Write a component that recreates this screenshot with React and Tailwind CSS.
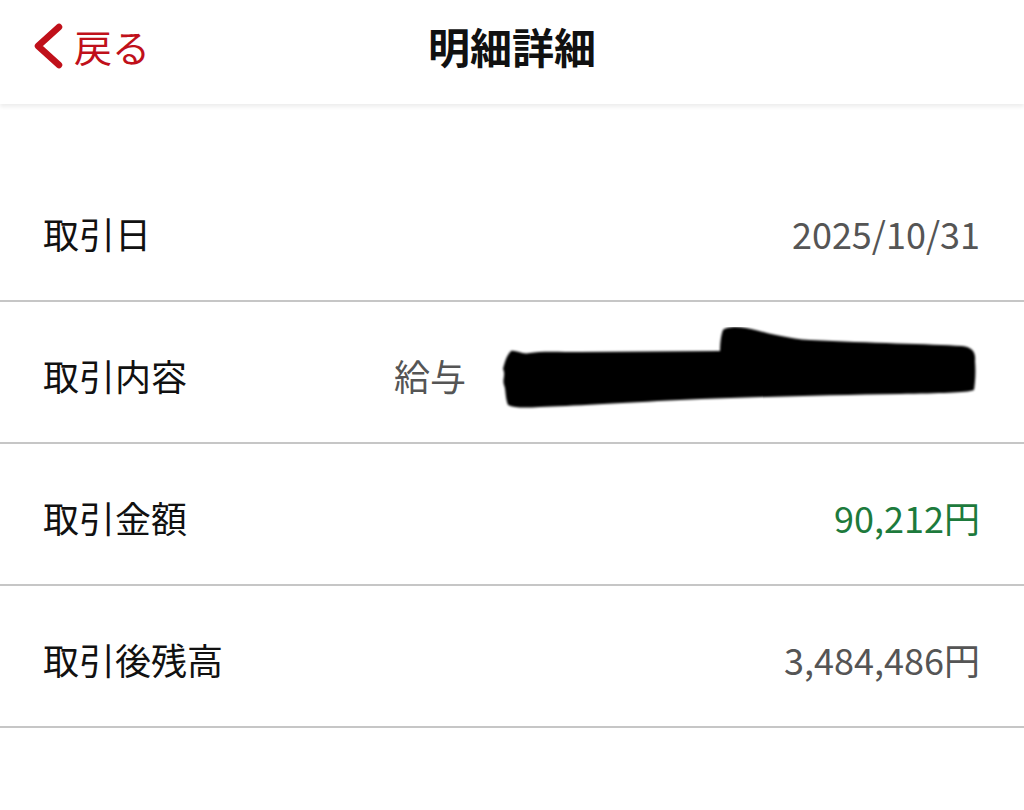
import React from "react";

const font = { fontFamily: '"Noto Sans CJK JP", "Noto Sans", sans-serif' };

const rows = [
  { label: "取引日", value: "2025/10/31", tone: "text-[#555555]" },
  { label: "取引内容", value: "給与", tone: "text-[#555555]", redacted: true },
  { label: "取引金額", value: "90,212円", tone: "text-[#1d7a3c]" },
  { label: "取引後残高", value: "3,484,486円", tone: "text-[#555555]" },
];

// hand-drawn black marker over the rest of the description
const Redaction = () => (
  <svg width="480" height="90" viewBox="0 0 480 90" className="block">
    <defs>
      <filter id="soft" x="-5%" y="-10%" width="110%" height="120%">
        <feGaussianBlur stdDeviation="1.1" />
      </filter>
    </defs>
    <path
      d="M8 78 C5 70 6 62 4 58 C2 52 6 48 3 42 C5 34 7 28 11 24 C17 23 22 28 30 26 C40 24 60 25 80 25 L220 24 C220 16 221 8 223 3 C226 0 236 -1 246 1 C262 4 282 11 310 13 C370 16 430 17 462 19 C472 20 476 25 475 34 C476 46 475 56 474 63 C466 66 440 66 400 67 C330 68 250 70 180 73 C120 76 70 79 40 80 C25 81 14 81 8 78 Z"
      fill="#000"
      filter="url(#soft)"
    />
  </svg>
);

const Row = ({ label, value, tone, redacted }) => (
  <div className="flex h-[142px] items-center justify-between border-b-2 border-[#c6c6c6] pl-[43px] pr-[44px] pt-[6px]">
    <span className="text-[36px] text-[#111111] leading-none">{label}</span>
    {redacted ? (
      <div className="flex items-center gap-[34px]">
        <span className={`text-[36px] leading-none ${tone}`}>{value}</span>
        <div className="-mt-[6px]">
          <Redaction />
        </div>
      </div>
    ) : (
      <span className={`text-[36px] leading-none ${tone}`}>{value}</span>
    )}
  </div>
);

export default function App() {
  return (
    <div className="h-[810px] w-[1024px] overflow-hidden bg-white" style={font}>
      {/* Header */}
      <header className="relative z-10 grid h-[104px] grid-cols-[1fr_auto_1fr] items-center bg-white pb-[12px] shadow-[0_3px_4px_rgba(0,0,0,0.07)]">
        <div className="flex items-center pl-[31px]">
          <svg width="34" height="46" viewBox="0 0 34 46" className="shrink-0">
            <path
              d="M28 4 L7 23 L28 42"
              fill="none"
              stroke="#c0101a"
              strokeWidth="6.5"
              strokeLinecap="round"
              strokeLinejoin="round"
            />
          </svg>
          <span className="ml-[9px] text-[38px] leading-none text-[#c0101a]">戻る</span>
        </div>
        <h1 className="text-[42px] font-bold leading-none text-[#111111]">明細詳細</h1>
        <div />
      </header>

      {/* Detail rows */}
      <div className="pt-[56px]">
        {rows.map((r) => (
          <Row key={r.label} {...r} />
        ))}
      </div>
    </div>
  );
}
